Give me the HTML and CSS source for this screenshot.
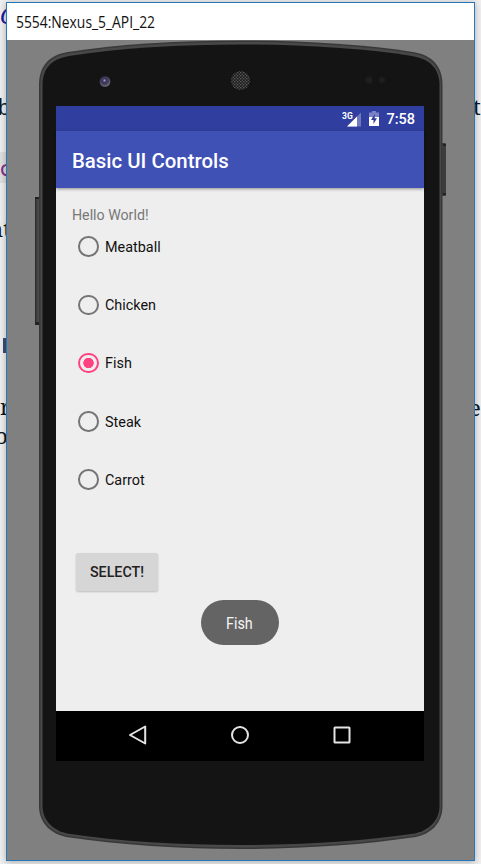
FILE: index.html
```html
<!DOCTYPE html>
<html lang="en">
<head>
<meta charset="utf-8">
<title>5554:Nexus_5_API_22</title>
<link rel="stylesheet" href="styles.css">
</head>
<body>
<div class="page-behind" aria-hidden="true">
  <span class="bit bit-link">C</span>
  <span class="bit bit-b">b</span>
  <span class="bit-code"></span>
  <span class="bit bit-c">c</span>
  <span class="bit bit-n">nt</span>
  <span class="bit-mark"></span>
  <span class="bit bit-r">r</span>
  <span class="bit bit-o">o</span>
  <span class="bit bit-t">t</span>
  <span class="bit bit-e">e</span>
</div>
<main class="window">
  <header class="titlebar"><span class="window-title">5554:Nexus_5_API_22</span></header>
  <div class="device">
    <svg class="shell" viewBox="7 40 467 820" width="467" height="820">
      <defs>
        <linearGradient id="key" x1="0" x2="1" y1="0" y2="0">
          <stop offset="0" stop-color="#282828"/><stop offset=".55" stop-color="#484848"/><stop offset="1" stop-color="#505050"/>
        </linearGradient>
        <pattern id="mesh" width="3" height="3" patternUnits="userSpaceOnUse">
          <rect width="3" height="3" fill="#1b1b1b"/><circle cx=".8" cy=".8" r=".75" fill="#686868"/><circle cx="2.3" cy="2.3" r=".7" fill="#5c5c5c"/>
        </pattern>
        <radialGradient id="lens" cx=".45" cy=".4" r=".6">
          <stop offset="0" stop-color="#a9a4d0"/><stop offset=".3" stop-color="#37335c"/><stop offset=".65" stop-color="#45415a"/><stop offset="1" stop-color="#777484"/>
        </radialGradient>
      </defs>
      <rect x="35" y="197" width="5" height="128" rx="1" fill="url(#key)"/>
      <rect x="35" y="197" width="4" height="2" fill="#222"/>
      <rect x="35" y="322" width="4" height="3" fill="#222"/>
      <rect x="441" y="143" width="5" height="53" rx="1" fill="#3c3c3c"/>
      <rect x="443" y="144" width="3" height="2" fill="#222"/>
      <rect x="443" y="193" width="3" height="2" fill="#222"/>
      <path d="M39 85C39 66 49 55 68 52C120 44 180 40.5 240.500 40.500S361 44 413 52C432 55 442.500 66 442.500 85V806C442.500 824 430 834 416 837C361 845 301 849 240.500 849S120 845 66 837C52 834 39 824 39 806Z" fill="#383838"/>
      <path d="M40.500 85C40.500 67 50 56.500 68 53.500C120 45.500 180 42 240.500 42S361 45.500 413 53.500C431 56.500 441 67 441 85V806C441 823 429 832.500 416 835.500C361 843.500 301 847.500 240.500 847.500S120 843.500 66 835.500C53 832.500 40.500 823 40.500 806Z" fill="#484848"/>
      <path d="M42.500 85C42.500 69 51 59 69 56C120 48 180 44.500 240.500 44.500S361 48 412 56C430 59 439.500 69 439.500 85V806C439.500 821 428 830.500 415 833.500C361 841.500 301 845 240.500 845S120 841.500 67 833.500C54 830.500 42.500 821 42.500 806Z" fill="#141414"/>
      <circle cx="105" cy="81.500" r="5.300" fill="url(#lens)"/>
      <circle cx="240.500" cy="80.500" r="9.500" fill="url(#mesh)"/>
      <circle cx="369" cy="80" r="3.500" fill="#1e1e1e"/>
      <circle cx="382" cy="80" r="3" fill="#1e1e1e"/>
    </svg>
    <section class="screen">
      <div class="statusbar">
        <svg class="signal" viewBox="0 0 20 16" width="20" height="16">
          <path d="M19 1.500V15.500H5Z" fill="#7079c0"/>
          <path d="M15 5.500V15.500H5Z" fill="#fff"/>
          <text x="0" y="8" class="network">3G</text>
        </svg>
        <svg class="battery" viewBox="0 0 10 15" width="10" height="15">
          <path d="M3 0H7V1.500H10V7H0V1.500H3Z" fill="#7a82c5"/>
          <path d="M0 6H10V15H0Z" fill="#fff"/>
          <path d="M5.700 3L2 9H4.500V13L8 7.200H5.700Z" fill="#303f9f"/>
        </svg>
        <span class="clock">7:58</span>
      </div>
      <div class="appbar"><h1>Basic UI Controls</h1></div>
      <div class="content">
        <p class="hello">Hello World!</p>
        <div class="options" role="radiogroup">
          <div class="option"><span class="radio"></span><span class="label">Meatball</span></div>
          <div class="option"><span class="radio"></span><span class="label">Chicken</span></div>
          <div class="option"><span class="radio checked"></span><span class="label">Fish</span></div>
          <div class="option"><span class="radio"></span><span class="label">Steak</span></div>
          <div class="option"><span class="radio"></span><span class="label">Carrot</span></div>
        </div>
        <button class="select">SELECT!</button>
        <div class="toast"><span>Fish</span></div>
      </div>
      <nav class="navbar">
        <svg viewBox="0 0 20 20" width="20" height="20"><path d="M17.200 1.500V18.500L2 10Z"/></svg>
        <svg viewBox="0 0 20 20" width="20" height="20"><circle cx="10" cy="10" r="8"/></svg>
        <svg viewBox="0 0 20 20" width="20" height="20"><rect x="2.500" y="2.500" width="15" height="15" rx=".5"/></svg>
      </nav>
    </section>
  </div>
</main>
</body>
</html>
```
FILE: styles.css
```css
* { box-sizing: border-box; }
body {
  margin: 0;
  height: 864px;
  padding: 2px 6px 3px;
  overflow: hidden;
  position: relative;
  background: #f0f0f0;
  font-family: Roboto, sans-serif;
}
.page-behind {
  position: absolute;
  inset: 0;
  overflow: hidden;
  font: 22px/26px "Noto Serif", "DejaVu Serif", serif;
  color: #101820;
}
.bit { position: absolute; }
.bit-link { left: 0; top: 2px; color: #1a1a9c; font-style: italic; }
.bit-b { left: -3px; top: 93px; }
.bit-code { position: absolute; left: 0; top: 152px; width: 6px; height: 31px; background: #e0e0e0; }
.bit-c { left: -1px; top: 156px; color: #85308a; font-family: "DejaVu Sans Mono", monospace; }
.bit-n { left: -11px; top: 215px; }
.bit-mark { position: absolute; left: 3px; top: 338px; width: 4px; height: 15px; background: #3b5078; }
.bit-r { left: 0; top: 393px; }
.bit-o { left: -5px; top: 422px; }
.bit-t { left: 473px; top: 93px; }
.bit-e { left: 469px; top: 394px; }

.window {
  position: relative;
  width: 469px;
  height: 859px;
  border: 1px solid #2878b8;
  background: #808080;
  box-shadow: 0 1px 7px rgba(0, 0, 0, .3);
  display: flex;
  flex-direction: column;
}
.titlebar {
  height: 37px;
  background: #fff;
  padding: 0 9px;
  display: flex;
  align-items: center;
}
.window-title {
  font: 15.5px/20px "Open Sans", sans-serif;
  color: #111;
  transform: scaleX(.895);
  transform-origin: left;
}
.device { position: relative; flex: 1; padding: 66px 49px 0; }
.shell { position: absolute; left: 0; top: 0; }
.screen {
  position: relative;
  width: 368px;
  height: 655px;
  display: flex;
  flex-direction: column;
  background: #eee;
}
.statusbar {
  height: 25px;
  background: #303f9f;
  display: flex;
  align-items: center;
  justify-content: flex-end;
  padding-right: 9px;
  color: #fff;
}
.network { font: 700 8.5px "Roboto", sans-serif; fill: #fff; }
.signal { margin-right: 7px; }
.battery { margin-right: 7px; }
.clock { font-size: 14.5px; font-weight: 500; line-height: 25px; padding-top: 1px; }
.appbar {
  position: relative;
  height: 57px;
  padding: 2px 0 0 16px;
  display: flex;
  align-items: center;
  background: #3f51b5;
  box-shadow: 0 1px 3px rgba(0, 0, 0, .4);
}
h1 { margin: 0; font-size: 20.4px; font-weight: 500; color: #fff; }
.content {
  flex: 1;
  display: flex;
  flex-direction: column;
  align-items: flex-start;
  padding: 17px 16px 0;
}
.hello { margin: 0; font-size: 14.2px; line-height: 20px; color: #777; }
.options { display: grid; grid-auto-rows: 58.3px; padding: 10px 0 0 6px; }
.option {
  display: flex;
  align-items: center;
  gap: 6.500px;
  height: 23px;
  font-size: 14.4px;
  color: #111;
}
.label { padding-top: 1.500px; }
.radio {
  width: 20.500px;
  height: 20.500px;
  border: 2px solid #757575;
  border-radius: 50%;
}
.radio.checked { border-color: #ff4081; background: radial-gradient(circle, #ff4081 4.900px, transparent 5.500px); }
.select {
  width: 82px;
  height: 38px;
  margin: 27px 0 0 4px;
  padding: 0;
  border: 0;
  border-radius: 2px;
  background: #d6d6d6;
  box-shadow: 0 1px 2px rgba(0, 0, 0, .2);
  font: 500 14.3px Roboto, sans-serif;
  color: #212121;
}
.toast {
  align-self: center;
  width: 78px;
  height: 45px;
  margin: 9px 1px 0 0;
  border-radius: 23px;
  background: #646464;
  color: #f5f5f5;
  font: 16.5px/47px Roboto, sans-serif;
  text-align: center;
}
.toast span { display: inline-block; transform: scaleX(.87); }
.navbar {
  height: 50px;
  padding: 0 72px 2px;
  display: flex;
  align-items: center;
  justify-content: space-between;
  background: #000;
}
.navbar svg { fill: none; stroke: #e4e4e4; stroke-width: 2; stroke-linejoin: round; }
```
